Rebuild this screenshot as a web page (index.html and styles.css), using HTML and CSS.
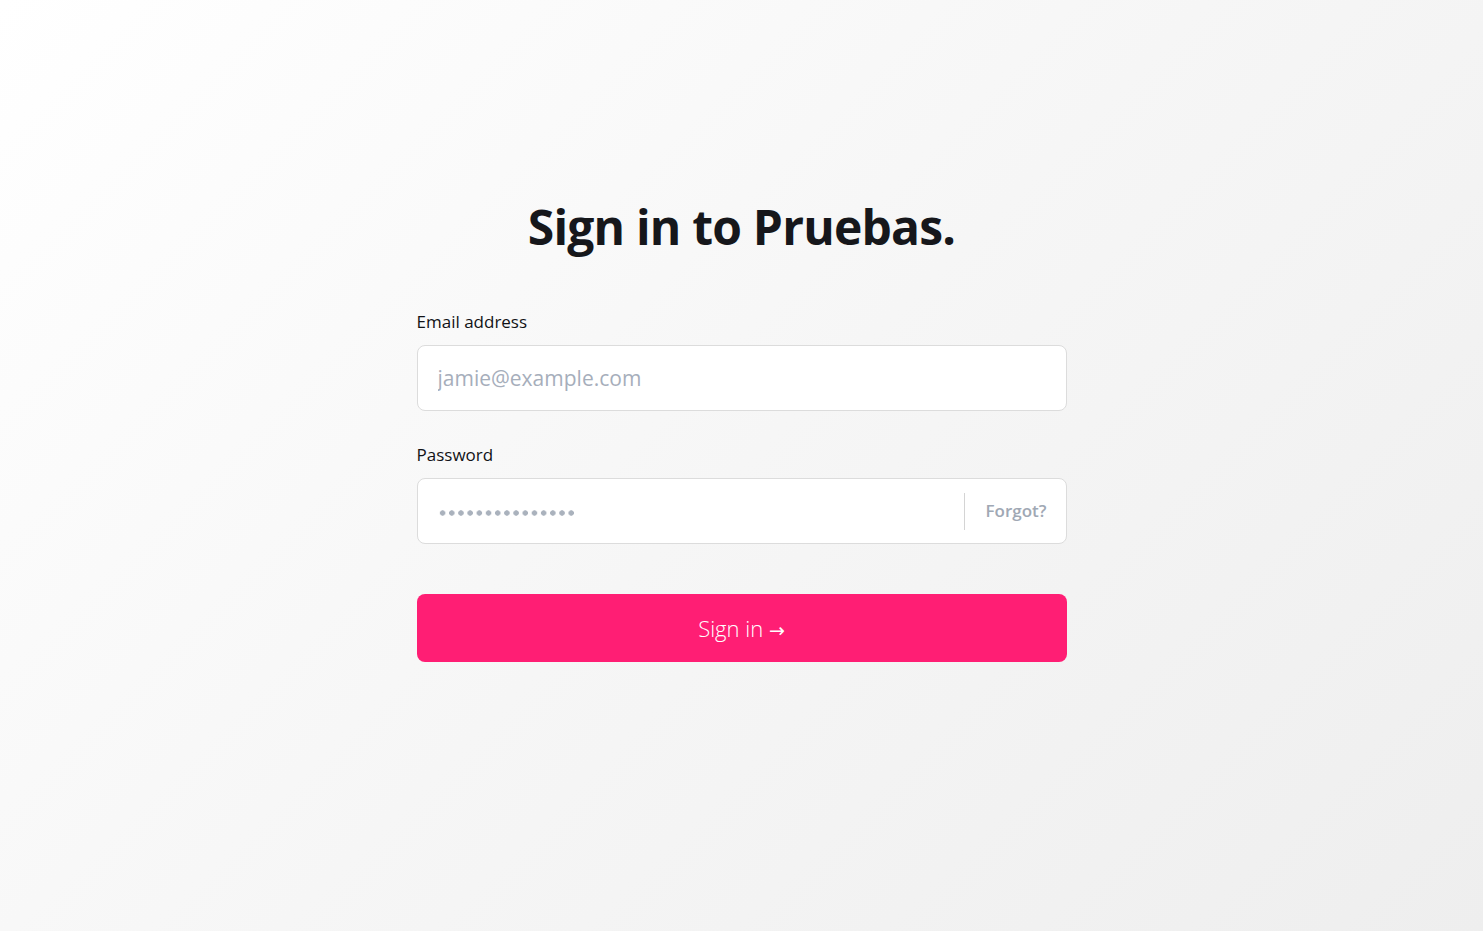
FILE: index.html
```html
<!DOCTYPE html>
<html>
<head>
<meta charset="utf-8">
<link rel="stylesheet" href="styles.css">
</head>
<body>
<main class="page">
  <h1 class="title">Sign in to Pruebas.</h1>
  <form class="form">
    <label class="label" for="email">Email address</label>
    <input class="input" id="email" type="email" placeholder="jamie@example.com">
    <label class="label label-pw" for="pw">Password</label>
    <div class="input pw-box">
      <span class="pw-field"><span class="dots" aria-label="password"></span></span>
      <span class="sep"></span>
      <a class="forgot">Forgot?</a>
    </div>
    <button class="btn" type="button">Sign in <span class="arrow">→</span></button>
  </form>
</main>
</body>
</html>
```
FILE: styles.css
```css
html, body { margin: 0; height: 100%; }
body {
  font-family: "Open Sans", "Noto Sans", sans-serif;
  background: linear-gradient(135deg, #ffffff 0%, #f6f6f6 50%, #eeeeee 100%);
  color: #17181c;
}
.page {
  display: flex;
  flex-direction: column;
  align-items: center;
  padding-top: 192px;
}
.title {
  margin: 0;
  font-size: 48px;
  font-weight: 700;
  letter-spacing: -0.8px;
  line-height: 70px;
  color: #16171b;
}
.form {
  width: 650px;
  display: flex;
  flex-direction: column;
  margin-top: 48px;
}
.label {
  font-size: 17px;
  line-height: 24px;
  color: #111216;
  margin-bottom: 11px;
}
.label-pw { margin-top: 32px; }
.input {
  box-sizing: border-box;
  height: 66px;
  border: 1px solid #dcdcdc;
  border-radius: 8px;
  background: #fff;
  padding: 0 20px;
  font-family: inherit;
  font-size: 21px;
  color: #333;
  outline: none;
}
.input::placeholder { color: #a6aebb; }
.pw-box {
  display: flex;
  align-items: center;
  padding-right: 19px;
}
.pw-field {
  flex: 1;
  display: flex;
  align-items: center;
  padding-top: 3px;
}
.dots {
  display: block;
  width: 138px;
  height: 6px;
  background: radial-gradient(circle, #aab2bd 2.4px, rgba(170,178,189,0) 3px) 0 0 / 9.2px 6px repeat-x;
}
.sep {
  width: 1px;
  height: 37px;
  background: #d4d4d4;
  margin-right: 20px;
}
.forgot {
  font-size: 17px;
  font-weight: 600;
  color: #a0a8b4;
  margin-top: -2px;
}
.btn {
  margin-top: 50px;
  height: 68px;
  border: none;
  border-radius: 8px;
  background: #ff1e74;
  color: #fff;
  font-family: inherit;
  font-size: 22px;
  font-weight: 300;
  cursor: pointer;
}
.arrow {
  font-family: "DejaVu Sans", sans-serif;
  font-size: 19px;
  font-weight: 400;
}
```
